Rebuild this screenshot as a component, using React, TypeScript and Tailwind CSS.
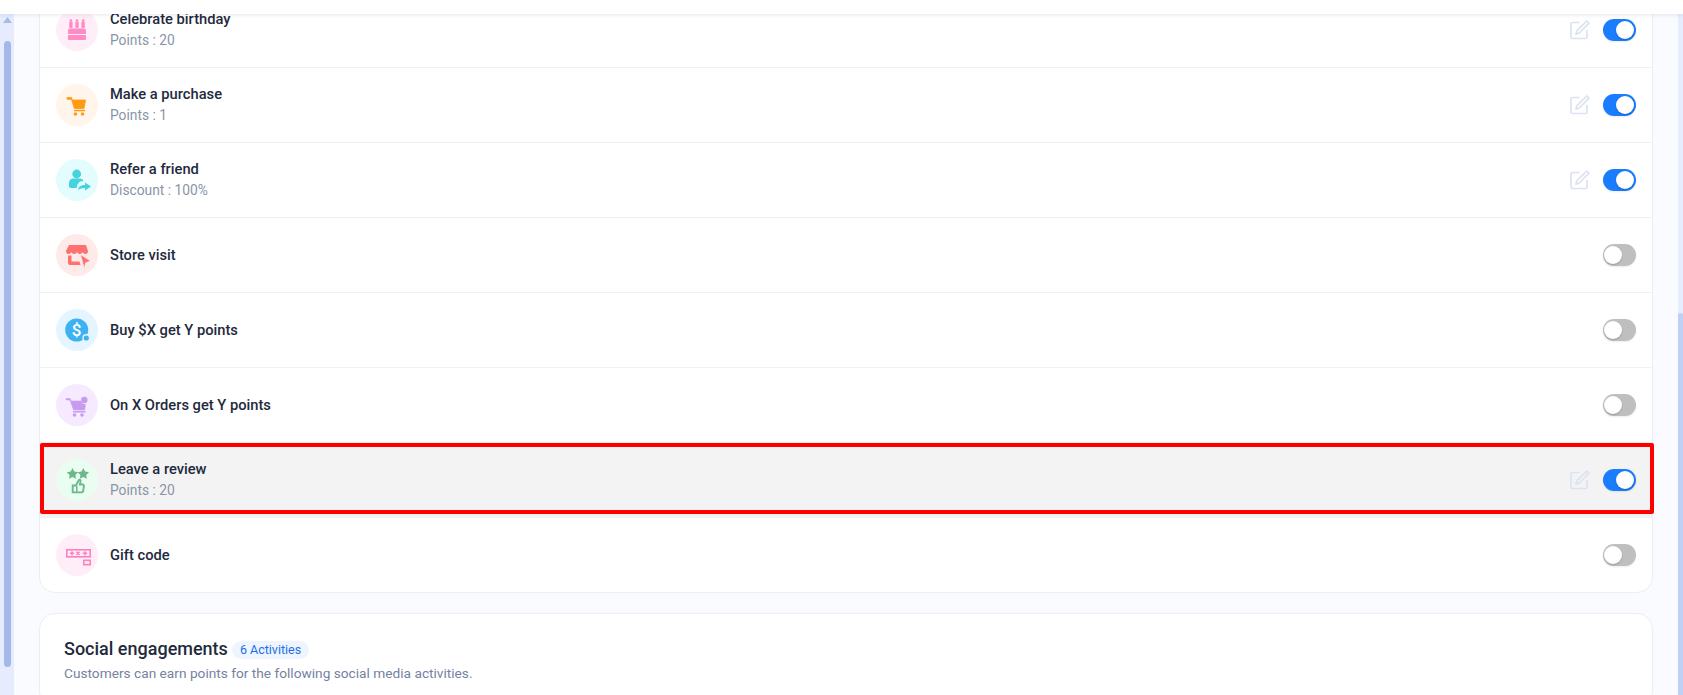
import React from "react";

const Cake = () => (
  <g fill="#ff8ac4">
    <rect x="13.200" y="12.500" width="3.400" height="6.500" rx="1" />
    <rect x="19.300" y="12.500" width="3.400" height="6.500" rx="1" />
    <rect x="25.400" y="12.500" width="3.400" height="6.500" rx="1" />
    <circle cx="14.900" cy="11.500" r="1.300" />
    <circle cx="21" cy="11.500" r="1.300" />
    <circle cx="27.100" cy="11.500" r="1.300" />
    <path d="M14 19.500h14a2 2 0 0 1 2 2v3.500H12v-3.500a2 2 0 0 1 2-2z" />
    <rect x="12" y="26" width="18" height="5" rx="1" />
  </g>
);

const Cart = () => (
  <g fill="#ff9a14">
    <path d="M11 13.500h4.500l.8 2.500H29.500l-1.500 8.500H18.400L15.800 16.500l-.8-1.200h-4z" stroke="#ff9a14" strokeWidth="0.8" />
    <rect x="18" y="25.800" width="11" height="1.500" />
    <circle cx="19.500" cy="30" r="1.800" />
    <circle cx="26.500" cy="30" r="1.800" />
  </g>
);

const Person = () => (
  <g fill="#45d3e0">
    <circle cx="20.700" cy="15" r="4.400" />
    <path d="M13 24c0-3 2-4.500 4-4.500h7c1.600 0 3 1 3.400 2.500L24 22.500c-2 1.500-3 3.500-3.300 6.500H15c-1.200 0-2-.8-2-2z" />
    <path d="M22 31c.5-3.500 3-5 7-5v-2.500l6 4-6 4V29c-2.500 0-5 .5-7 2z" />
  </g>
);

const Store = () => (
  <g fill="#ff7070">
    <path d="M13 11h17l2 6c0 2-1 3-2.500 3s-2.500-1-2.800-2c-.3 1-1.400 2-2.800 2s-2.500-1-2.900-2c-.4 1-1.500 2-2.900 2s-2.400-1-2.800-2c-.3 1-1.300 2-2.800 2S10 19 10 17z" />
    <path d="M12 21.500h3.500V27.500h8l1 3.500H14a2 2 0 0 1-2-2z" />
    <path d="M24.500 20.500l10 6.500-4.800 1.800-1.500 5.700z" stroke="#ffeaea" strokeWidth="0.7" />
  </g>
);

const Dollar = () => (
  <g>
    <circle cx="20.700" cy="21" r="11.500" fill="#3db2f2" />
    <circle cx="30.300" cy="29" r="4" fill="#e5f5ff" />
    <circle cx="30.300" cy="29" r="2.600" fill="#3db2f2" />
    <text x="20.700" y="27" textAnchor="middle" fontSize="17" fontWeight="500" fill="#ffffff" fontFamily="Roboto, sans-serif">$</text>
  </g>
);

const PurpleCart = () => (
  <g fill="#c99bf0">
    <path d="M10 14.500h4.200l1 2.500h9.800c.6 2 2 3.200 4.500 3.500l-.8 5.500H17.500L14 16h-4z" stroke="#c99bf0" strokeWidth="0.5" />
    <rect x="17" y="27" width="12.500" height="1.500" />
    <circle cx="28.300" cy="16" r="3.200" />
    <circle cx="18.500" cy="31" r="1.800" />
    <circle cx="26" cy="31" r="1.800" />
  </g>
);

const starPath = (cx: number, cy: number, r: number) => {
  const pts: string[] = [];
  for (let i = 0; i < 10; i++) {
    const a = -Math.PI / 2 + (i * Math.PI) / 5;
    const rad = i % 2 === 0 ? r : r * 0.5;
    pts.push(`${(cx + rad * Math.cos(a)).toFixed(2)},${(cy + rad * Math.sin(a)).toFixed(2)}`);
  }
  return pts.join(" ");
};

const Review = () => (
  <g>
    <polygon points={starPath(16.500, 15, 6)} fill="#6cb88a" />
    <polygon points={starPath(27.300, 15, 6)} fill="#6cb88a" />
    <path
      d="M16.700 26.500h3.300l2.300-4.500c.4-1 1-1.500 1.600-1.300.8.300.8 1.300.5 2.300l-.5 2.500h2.800c.9 0 1.300.7 1.200 1.500l-.8 5.200c-.1.700-.6 1.200-1.300 1.200h-9.100z"
      fill="#e9fdf0"
      stroke="#6cb88a"
      strokeWidth="1.900"
    />
    <path d="M20.800 27v6" stroke="#6cb88a" strokeWidth="1.500" />
  </g>
);

const Gift = () => (
  <g stroke="#ff80bf" fill="none">
    <rect x="10.800" y="15.800" width="23.400" height="7" strokeWidth="1.600" />
    <rect x="27.800" y="26.300" width="6.400" height="4.400" strokeWidth="1.600" />
    <path d="M13.800 19.300h4.400M16 17.200v4.200M20.400 17.700l3.200 3.200M23.600 17.700l-3.200 3.200M26.800 19.300h4.400M29 17.200v4.200" strokeWidth="1.500" />
  </g>
);

const Pen = () => (
  <svg width="20" height="20" viewBox="0 0 20 20" fill="none" stroke="#dbe2f2" strokeWidth="1.700" className="shrink-0">
    <path d="M9.500 2.500H2.500a1.500 1.500 0 0 0-1.500 1.500v13a1.500 1.500 0 0 0 1.500 1.500h13a1.500 1.500 0 0 0 1.500-1.500v-7" />
    <path d="M16.800 1l2.200 2.200-9.700 9.800-3.400 1.100 1.100-3.400z" strokeLinejoin="round" />
  </svg>
);

const Toggle = ({ on }: { on: boolean }) => (
  <div
    className={
      on
        ? "flex h-[22px] w-[33px] items-center justify-end rounded-full bg-[#1a7cff] pr-[2px] shadow-[0_1px_2px_rgba(0,0,0,0.08)]"
        : "flex h-[22px] w-[33px] items-center justify-start rounded-full bg-[#bfbfbf] pl-[1px] shadow-[0_1px_2px_rgba(0,0,0,0.08)]"
    }
  >
    <div className="h-[18px] w-[18px] rounded-full bg-white shadow-[0_1px_2px_rgba(0,0,0,0.2)]" />
  </div>
);

type Row = {
  title: string;
  sub?: string;
  bg: string;
  icon: React.ReactNode;
  on: boolean;
  marked?: boolean;
};

const rows: Row[] = [
  { title: "Celebrate birthday", sub: "Points : 20", bg: "bg-[#ffeef7]", icon: <Cake />, on: true },
  { title: "Make a purchase", sub: "Points : 1", bg: "bg-[#fff5ea]", icon: <Cart />, on: true },
  { title: "Refer a friend", sub: "Discount : 100%", bg: "bg-[#e3fcfe]", icon: <Person />, on: true },
  { title: "Store visit", bg: "bg-[#ffeaea]", icon: <Store />, on: false },
  { title: "Buy $X get Y points", bg: "bg-[#e5f5ff]", icon: <Dollar />, on: false },
  { title: "On X Orders get Y points", bg: "bg-[#f5eaff]", icon: <PurpleCart />, on: false },
  { title: "Leave a review", sub: "Points : 20", bg: "bg-[#e9fdf0]", icon: <Review />, on: true, marked: true },
  { title: "Gift code", bg: "bg-[#ffeef7]", icon: <Gift />, on: false },
];

export default function App() {
  return (
    <div className="flex h-[695px] w-[1683px] flex-col overflow-hidden bg-[#fafbff] font-['Roboto',sans-serif]">
      <div className="relative z-10 h-[14px] shrink-0 bg-white shadow-[0_1px_4px_rgba(30,40,80,0.1)]" />
      <div className="flex min-h-0 flex-1">
        <div className="flex w-[14px] shrink-0 flex-col items-center bg-[#e6ebfd]">
          <svg width="9" height="6" viewBox="0 0 9 6" className="mt-[3px] shrink-0">
            <path d="M4.500 0L9 6H0z" fill="#a9bbe8" />
          </svg>
          <div className="mt-[18px] h-[626px] w-[7px] shrink-0 rounded-full bg-[#a3b8e8]" />
        </div>

        <div className="min-w-0 flex-1 px-[25px]">
          <div className="mt-[-22px] rounded-[16px] border border-[#eceef3] bg-white">
            {rows.map((r, i) => (
              <div
                key={r.title}
                className={
                  (r.marked ? "relative bg-[#f3f3f3] " : "") +
                  (i < rows.length - 1 ? "border-b border-[#f0f1f5] " : "") +
                  "flex h-[75px] items-center pl-4 pr-4 last:h-[74px]"
                }
              >
                <div className={`flex h-[42px] w-[42px] shrink-0 items-center justify-center rounded-full ${r.bg}`}>
                  <svg width="42" height="42" viewBox="0 0 42 42">
                    {r.icon}
                  </svg>
                </div>
                <div className="ml-3 flex-1">
                  <div className={(r.sub ? "mt-[-1px] " : "") + "text-[14.7px] leading-[20px] font-medium text-[#1f2a3d]"}>{r.title}</div>
                  {r.sub && <div className="mt-[1px] text-[13.8px] leading-[20px] text-[#8a94a6]">{r.sub}</div>}
                </div>
                <div className="flex items-center gap-[13px]">
                  {r.on && <Pen />}
                  <Toggle on={r.on} />
                </div>
                {r.marked && (
                  <div className="absolute top-0 right-[-2px] left-0 h-[71px] rounded-[2px] border-[4px] border-[#ff0000]" />
                )}
              </div>
            ))}
          </div>

          <div className="mt-5 rounded-[16px] border border-[#eceef3] bg-white px-6 pt-[22px] pb-6">
            <div className="flex items-center gap-[4px]">
              <div className="text-[18px] leading-[26px] font-medium text-[#1f2a3d]">Social engagements</div>
              <div className="mt-[1px] rounded-full bg-[#eef5ff] px-2 text-[12.5px] leading-[18px] text-[#1a6fe8]">6 Activities</div>
            </div>
            <div className="mt-[1px] text-[13.7px] leading-[20px] text-[#76829f]">
              Customers can earn points for the following social media activities.
            </div>
          </div>
        </div>

        <div className="flex w-[5px] shrink-0 flex-col bg-[#e6edff]">
          <div className="mt-[299px] min-h-0 flex-1 rounded-t-[2px] bg-[#bed0f5]" />
        </div>
      </div>
    </div>
  );
}
